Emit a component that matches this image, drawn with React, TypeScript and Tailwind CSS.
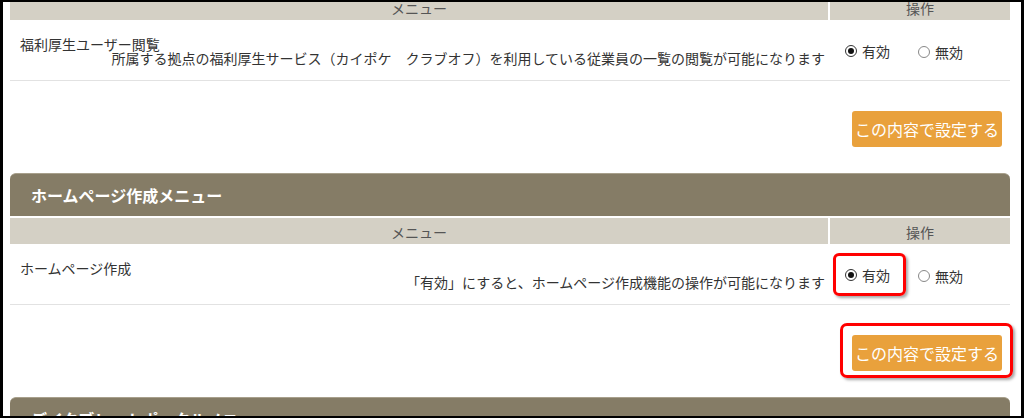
import React from "react";

function Radio({ checked, label }: { checked: boolean; label: string }) {
  return (
    <span className="inline-flex items-center">
      <span
        className={
          checked
            ? "w-[12px] h-[12px] rounded-full border border-[#333] bg-white flex items-center justify-center"
            : "w-[12px] h-[12px] rounded-full border border-[#888] bg-white"
        }
      >
        {checked && <span className="w-[6px] h-[6px] rounded-full bg-[#111]" />}
      </span>
      <span className="ml-[5px] text-[14px] leading-[14px] text-[#333]">{label}</span>
    </span>
  );
}

function TableHead() {
  return (
    <div className="flex h-[26px] gap-[2px] text-[14px] text-[#555]">
      <div className="flex-1 bg-[#d4d0c5] flex items-center justify-center pt-[3px]">メニュー</div>
      <div className="w-[180px] bg-[#d4d0c5] flex items-center justify-center pt-[3px]">操作</div>
    </div>
  );
}

function Row({ label, desc, highlight }: { label: string; desc: string; highlight?: boolean }) {
  return (
    <div className="flex border-b border-[#e2e2e2]">
      <div className="w-[820px] pt-[17px] pb-[15px] pl-[10px] pr-[5px] text-[14px] leading-[14px] text-[#333]">
        <div>{label}</div>
        <div className="text-right whitespace-nowrap">{desc}</div>
      </div>
      <div className="relative w-[180px] flex items-center pl-[15px] pt-[2px]">
        <Radio checked label="有効" />
        <span className="ml-[28px]">
          <Radio checked={false} label="無効" />
        </span>
        {highlight && (
          <div className="absolute left-[3px] top-[9px] w-[73px] h-[43px] border-[3px] border-[#ff0000] rounded-[6px] shadow-[2px_2px_3px_rgba(0,0,0,0.35)]" />
        )}
      </div>
    </div>
  );
}

function ButtonRow({ highlight }: { highlight?: boolean }) {
  return (
    <div className="flex justify-end pt-[30px] pb-[26px] pr-[8px]">
      <div className="relative">
        <button className="w-[150px] h-[36px] bg-[#e9a13c] text-white text-[16px] rounded-[3px] flex items-center justify-center">
          この内容で設定する
        </button>
        {highlight && (
          <div className="absolute -left-[12px] -top-[12px] -right-[11px] -bottom-[7px] border-[3px] border-[#ff0000] rounded-[7px] shadow-[2px_2px_3px_rgba(0,0,0,0.35)]" />
        )}
      </div>
    </div>
  );
}

function SectionHeader({ title }: { title: string }) {
  return (
    <div className="h-[43px] mb-[2px] bg-[#857c66] border-t border-[#a8a08c] rounded-t-[6px] flex items-center pl-[21px] text-white font-bold text-[16px]">
      {title}
    </div>
  );
}

export default function App() {
  return (
    <div className="w-[1027px] h-[418px] bg-white overflow-hidden font-['Noto_Sans_CJK_JP',sans-serif]">
      <div className="relative w-[1024px] h-[418px] border-l-[3px] border-t-2 border-r-[3px] border-b-2 border-black overflow-hidden bg-white">
        <div className="pl-[7px] -mt-[8px]">
          <div className="w-[1000px]">
            <TableHead />
            <Row
              label="福利厚生ユーザー閲覧"
              desc="所属する拠点の福利厚生サービス（カイポケ　クラブオフ）を利用している従業員の一覧の閲覧が可能になります"
            />
            <ButtonRow />

            <SectionHeader title="ホームページ作成メニュー" />
            <TableHead />
            <Row
              label="ホームページ作成"
              desc="「有効」にすると、ホームページ作成機能の操作が可能になります"
              highlight
            />
            <ButtonRow highlight />

            <SectionHeader title="デイタブレットポータルメニュー" />
          </div>
        </div>
      </div>
    </div>
  );
}
